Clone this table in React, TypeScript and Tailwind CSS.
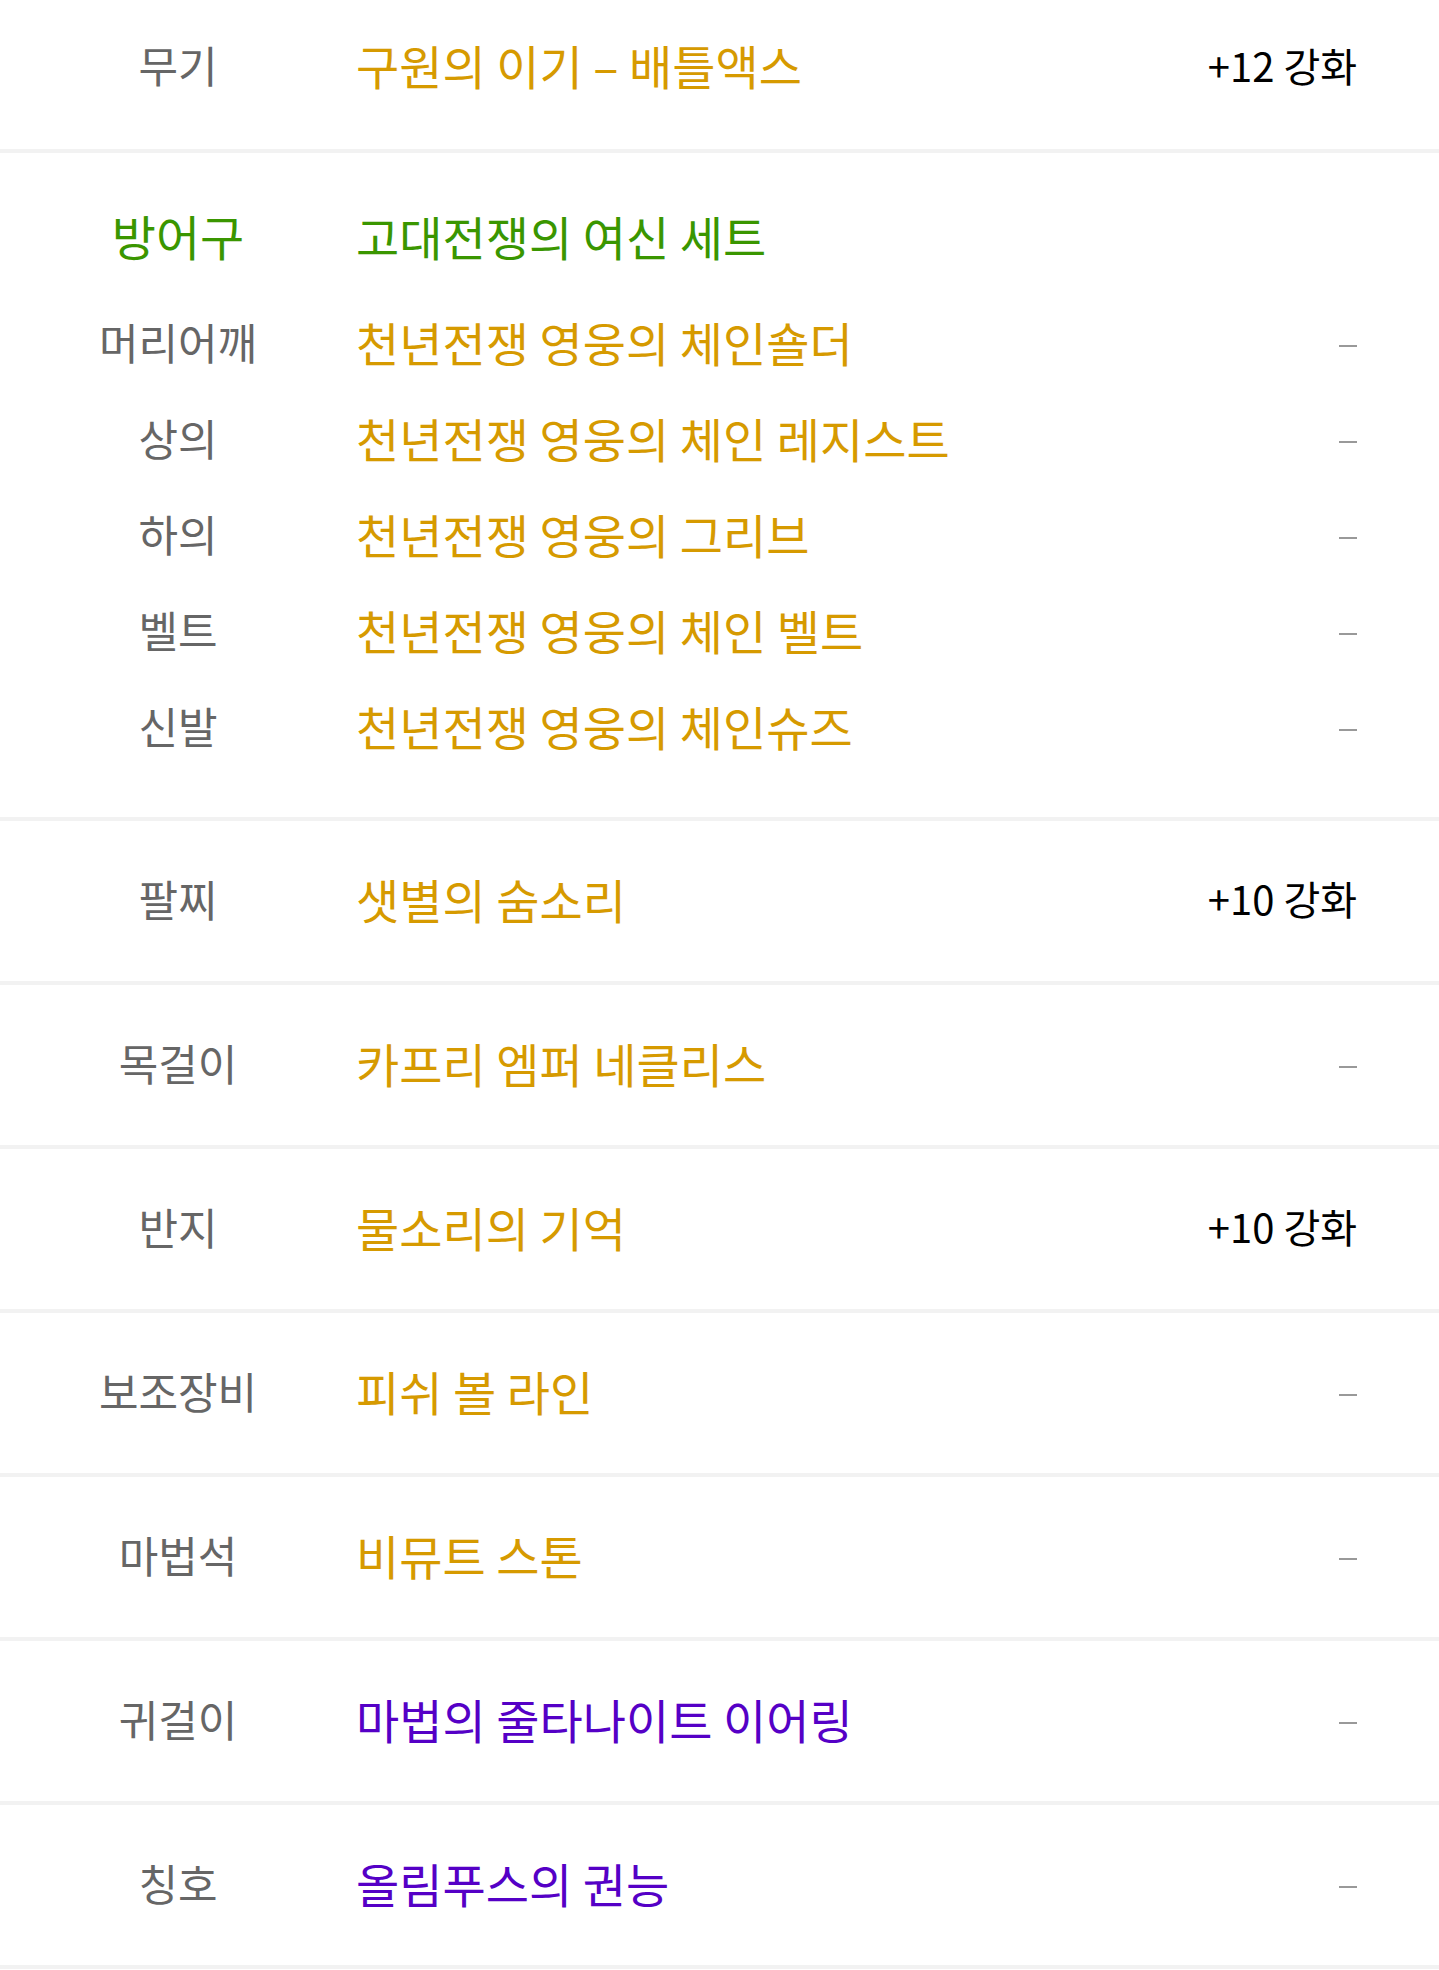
type Item = {
  label: string;
  name: string;
  tone: "gold" | "purple";
  extra?: string;
};

const font = { fontFamily: '"Noto Sans CJK KR", "Noto Sans", sans-serif' };

const toneClass = {
  gold: "text-[#d69a00]",
  purple: "text-[#5500c6]",
};

const armor = [
  { label: "머리어깨", name: "천년전쟁 영웅의 체인숄더" },
  { label: "상의", name: "천년전쟁 영웅의 체인 레지스트" },
  { label: "하의", name: "천년전쟁 영웅의 그리브" },
  { label: "벨트", name: "천년전쟁 영웅의 체인 벨트" },
  { label: "신발", name: "천년전쟁 영웅의 체인슈즈" },
];

const others: Item[] = [
  { label: "팔찌", name: "샛별의 숨소리", tone: "gold", extra: "+10 강화" },
  { label: "목걸이", name: "카프리 엠퍼 네클리스", tone: "gold" },
  { label: "반지", name: "물소리의 기억", tone: "gold", extra: "+10 강화" },
  { label: "보조장비", name: "피쉬 볼 라인", tone: "gold" },
  { label: "마법석", name: "비뮤트 스톤", tone: "gold" },
  { label: "귀걸이", name: "마법의 줄타나이트 이어링", tone: "purple" },
  { label: "칭호", name: "올림푸스의 권능", tone: "purple" },
];

const Dash = () => (
  <span className="block w-[18px] h-[2px] mt-[10px] bg-[#999999]" />
);

const Right = ({ extra }: { extra?: string }) => (
  <div className="w-[300px] pr-[82px] flex justify-end items-center">
    {extra ? (
      <span className="text-[40px] text-black leading-none">{extra}</span>
    ) : (
      <Dash />
    )}
  </div>
);

const Label = ({ children }: { children: string }) => (
  <div className="w-[356px] text-center text-[43px] text-[#666666] leading-none">
    {children}
  </div>
);

const Row = ({ item }: { item: Item }) => (
  <div className="flex items-center h-[164px] pb-[6px] border-b-4 border-[#f2f2f2]">
    <Label>{item.label}</Label>
    <div className={`flex-1 text-[47px] leading-none ${toneClass[item.tone]}`}>
      {item.name}
    </div>
    <Right extra={item.extra} />
  </div>
);

export default function App() {
  return (
    <div className="w-[1439px] bg-white" style={font}>
      <div className="flex items-center h-[153px] pb-[20px] border-b-4 border-[#f2f2f2]">
        <Label>무기</Label>
        <div className="flex-1 text-[47px] leading-none text-[#d69a00]">
          구원의 이기 – 배틀액스
        </div>
        <Right extra="+12 강화" />
      </div>

      <div className="pt-[37px] pb-[41px] border-b-4 border-[#f2f2f2]">
        <div className="flex items-center h-[96px] pb-[6px] mb-[10px]">
          <div className="w-[356px] text-center text-[48px] text-[#3a9600] leading-none">
            방어구
          </div>
          <div className="flex-1 text-[47px] leading-none text-[#3a9600]">
            고대전쟁의 여신 세트
          </div>
        </div>
        {armor.map((a) => (
          <div key={a.label} className="flex items-center h-[96px] pb-[6px]">
            <Label>{a.label}</Label>
            <div className="flex-1 text-[47px] leading-none text-[#d69a00]">
              {a.name}
            </div>
            <Right />
          </div>
        ))}
      </div>

      {others.map((o) => (
        <Row key={o.label} item={o} />
      ))}
    </div>
  );
}
